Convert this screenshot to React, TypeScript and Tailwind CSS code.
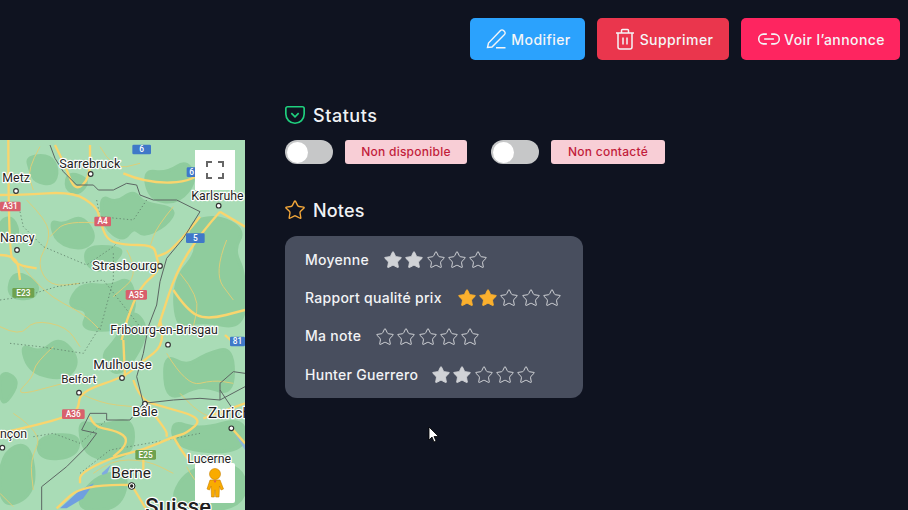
import { Star } from 'lucide-react';

// Fond de carte : coordonnées en 3x de la zone (245x370)
const blobs = [
  'M80 50 L150 45 L175 90 L160 135 L105 125 L90 90 Z',
  'M205 95 L270 120 L235 165 L195 145 Z',
  'M300 165 L350 190 L400 150 L430 190 L530 205 L500 255 L430 290 L400 260 L370 305 L310 260 Z',
  'M430 90 L500 100 L560 60 L590 120 L535 190 L450 180 Z',
  'M150 240 L190 255 L245 225 L290 290 L250 330 L170 310 Z',
  'M260 320 L350 320 L370 340 L300 400 L255 370 Z',
  'M560 250 L650 225 L735 270 L700 330 L735 400 L735 570 L600 540 L530 570 L520 420 L600 330 Z',
  'M240 430 L330 440 L390 410 L410 500 L370 570 L240 570 L270 510 L200 500 Z',
  'M40 390 L120 430 L100 480 L20 470 Z',
  'M0 240 L40 230 L60 290 L0 300 Z',
  'M400 500 L450 580 L360 720 L300 650 L350 600 Z',
  'M60 610 L120 640 L180 590 L240 660 L200 720 L90 700 Z',
  'M0 940 L90 900 L110 1060 L0 1110 Z',
  'M110 890 L240 880 L230 950 L120 960 Z',
  'M230 840 L300 860 L400 830 L400 950 L260 960 Z',
  'M490 640 L560 680 L620 640 L700 620 L700 770 L600 730 L500 790 Z',
  'M510 840 L600 870 L735 830 L735 940 L530 930 Z',
  'M560 980 L735 970 L735 1110 L500 1110 Z',
  'M280 1010 L390 990 L360 1110 L220 1110 Z',
  'M0 690 L60 720 L20 790 L0 780 Z',
];

const roads = [
  'M25 -15 L25 340 L50 375 L110 385',
  'M0 345 L50 345 L60 420',
  'M0 165 L60 165 L220 155 L290 200 L300 240 L320 300 L370 315 L460 315 L470 350 L480 390 L420 440 L380 540 L365 600',
  'M165 15 L195 75 L225 155 L270 115 L270 15',
  'M370 100 L440 130 L585 125 L640 50',
  'M600 230 L520 330 L470 350',
  'M660 215 L610 270 L530 390 L480 545 L475 560',
  'M660 215 L735 260',
  'M520 450 L560 510 L620 540 L735 510',
  'M480 540 L500 610 L420 670 L375 710 L240 755 L235 810 L200 830 L110 855 L0 880',
  'M370 600 L375 710',
  'M400 720 L420 780 L490 800 L610 835 L560 880 L520 890 L430 930 L340 950 L240 1000 L240 1030',
  'M435 790 L500 870 L500 890',
  'M270 830 L280 860 L340 870 L380 890 L375 920 L340 950',
  'M610 835 L735 790',
  'M700 870 L735 910',
  'M430 930 L430 990',
  'M395 1035 L250 1030 L170 1105',
  'M395 1035 L440 1110',
  'M520 890 L560 960 L590 970',
  'M675 585 L700 610 L735 610',
];

const thinRoads = [
  'M160 620 L105 670 L100 710 L40 770 L190 730',
  'M80 180 L140 240 L150 300 L110 370 L150 440 L240 430',
  'M300 250 L200 240 L150 290',
  'M520 200 L470 260 L450 320',
  'M500 640 L560 740 L640 720 L700 730',
  'M40 820 L130 880 L90 960 L100 1050',
  'M540 760 L620 850 L700 800',
  'M280 1000 L330 960 L440 960 L520 1000',
  'M0 560 L60 590 L100 540 L200 560 L240 620',
  'M60 370 L130 460 L250 520 L300 570',
  'M540 400 L600 470 L580 560',
  'M380 330 L420 400 L340 470',
  'M680 300 L640 400 L700 480',
  'M120 20 L80 90 L100 150',
  'M300 20 L340 90 L420 70',
  'M240 760 L300 790 L400 800',
  'M560 980 L600 1060 L700 1030',
  'M0 1060 L40 1100',
];

const borders = [
  'M150 15 L165 55 L190 95 L230 135 L280 135 L295 150 L340 150 L380 130 L410 135 L420 165 L460 180 L530 180 L600 215 L550 295 L500 355 L480 425 L470 495 L445 560 L430 640 L410 710 L430 790 L520 780 L600 775 L660 780 L660 730 L700 695 L735 700',
  'M430 790 L390 840 L320 840 L320 820 L270 820 L245 870 L290 880 L260 920 L200 980 L125 1040 L125 1110',
  'M660 780 L735 740',
  'M660 750 L700 810 L735 820',
];

const dotted = [
  'M60 215 L70 260 L130 320 L260 375 L340 320 L360 300',
  'M0 480 L70 470 L170 440 L310 420 L420 560',
  'M290 180 L300 230 L400 240 L440 180',
  'M340 340 L340 420 L300 570',
  'M30 610 L120 620 L250 640 L300 560',
  'M100 890 L160 880 L240 910 L320 840',
  'M240 1000 L330 930 L500 900 L600 880',
];

// Arrondit une suite de points en passant par les milieux des segments
function smooth(d: string) {
  const n = d.match(/-?\d+/g)!.map(Number);
  const pts: [number, number][] = [];
  for (let i = 0; i < n.length; i += 2) pts.push([n[i], n[i + 1]]);
  const closed = d.trim().endsWith('Z');
  const mid = (a: [number, number], b: [number, number]) => `${(a[0] + b[0]) / 2} ${(a[1] + b[1]) / 2}`;
  if (closed) {
    let out = `M${mid(pts[pts.length - 1], pts[0])}`;
    pts.forEach((p, i) => {
      out += ` Q${p[0]} ${p[1]} ${mid(p, pts[(i + 1) % pts.length])}`;
    });
    return out + ' Z';
  }
  let out = `M${pts[0][0]} ${pts[0][1]}`;
  for (let i = 1; i < pts.length - 1; i++) out += ` Q${pts[i][0]} ${pts[i][1]} ${mid(pts[i], pts[i + 1])}`;
  const last = pts[pts.length - 1];
  return out + ` L${last[0]} ${last[1]}`;
}

type MapLabel = { t: string; x: number; y: number; s: number; w?: number };
const labels: MapLabel[] = [
  { t: 'Sarrebruck', x: 178, y: 83, s: 38 },
  { t: 'Metz', x: 7, y: 127, s: 37 },
  { t: 'Karlsruhe', x: 574, y: 180, s: 37 },
  { t: 'Nancy', x: 0, y: 307, s: 37 },
  { t: 'Strasbourg', x: 276, y: 389, s: 40 },
  { t: 'Fribourg-en-Brisgau', x: 331, y: 583, s: 37 },
  { t: 'Mulhouse', x: 280, y: 686, s: 40 },
  { t: 'Belfort', x: 184, y: 730, s: 35 },
  { t: 'Bâle', x: 397, y: 827, s: 39 },
  { t: 'Zurich', x: 624, y: 833, s: 46 },
  { t: 'nçon', x: 0, y: 894, s: 37 },
  { t: 'Lucerne', x: 562, y: 968, s: 37 },
  { t: 'Berne', x: 334, y: 1015, s: 46 },
  { t: 'Suisse', x: 436, y: 1122, s: 66, w: 500 },
];

const shields = [
  { t: '6', x: 397, y: 14, w: 56, c: '#3f78c8' },
  { t: '6', x: 560, y: 82, w: 30, c: '#3f78c8' },
  { t: 'A31', x: 0, y: 185, w: 62, c: '#d8606c' },
  { t: 'A4', x: 283, y: 230, w: 50, c: '#d8606c' },
  { t: '5', x: 558, y: 280, w: 56, c: '#3f78c8' },
  { t: 'E23', x: 37, y: 444, w: 66, c: '#6fa24e' },
  { t: 'A35', x: 377, y: 450, w: 64, c: '#d8606c' },
  { t: '81', x: 690, y: 590, w: 45, c: '#3f78c8' },
  { t: 'A36', x: 186, y: 808, w: 68, c: '#d8606c' },
  { t: 'E25', x: 406, y: 930, w: 62, c: '#6fa24e' },
];

const cities = [
  [272, 102], [48, 153], [656, 197], [51, 330], [480, 378], [504, 614], [366, 714], [237, 758], [435, 791], [694, 865], [7, 923],
];

function MapDrawing() {
  return (
    <svg viewBox="0 0 735 1110" className="block h-full w-full" fontFamily="Roboto, sans-serif">
      <rect width="735" height="1110" fill="#a9dcb6" />
      {blobs.map((d) => (
        <path key={d} d={smooth(d)} fill="#8fcc9d" stroke="#8fcc9d" strokeWidth="10" strokeLinejoin="round" />
      ))}
      <path d="M180 1105 L240 1050 L282 1030 L250 1075 L200 1105 Z" fill="#6f9fe0" />
      <path d="M305 1000 L332 975 L322 1000 L308 1005 Z" fill="#7fabe0" />
      <path d="M702 880 L735 915 L735 930 Z" fill="#8fb6dc" />
      {thinRoads.map((d) => (
        <path key={d} d={smooth(d)} fill="none" stroke="#dccf7a" strokeWidth="3" />
      ))}
      {dotted.map((d) => (
        <path key={d} d={d} fill="none" stroke="#5f7f6a" strokeWidth="2.5" strokeDasharray="4 7" />
      ))}
      {roads.map((d) => (
        <path key={d} d={smooth(d)} fill="none" stroke="#f9d56e" strokeWidth="7" strokeLinejoin="round" />
      ))}
      {borders.map((d) => (
        <path key={d} d={d} fill="none" stroke="#5c6663" strokeWidth="3" strokeLinejoin="round" />
      ))}
      {cities.map(([x, y]) => (
        <circle key={`${x}-${y}`} cx={x} cy={y} r="7" fill="#fff" stroke="#333" strokeWidth="3.5" />
      ))}
      <circle cx="395" cy="1038" r="10" fill="#fff" stroke="#222" strokeWidth="3" />
      <circle cx="395" cy="1038" r="5" fill="#222" />
      {shields.map((s) => (
        <g key={s.t + s.x}>
          <rect x={s.x} y={s.y} width={s.w} height="29" rx="4" fill={s.c} />
          <text x={s.x + s.w / 2} y={s.y + 23} textAnchor="middle" fontSize="25" fontWeight="500" fill="#fff">
            {s.t}
          </text>
        </g>
      ))}
      {labels.map((l) => (
        <text
          key={l.t}
          x={l.x}
          y={l.y}
          fontSize={l.s}
          fontWeight={l.w ?? 400}
          fill="#1f1f1f"
          stroke="#fff"
          strokeWidth="7"
          strokeLinejoin="round"
          paintOrder="stroke"
        >
          {l.t}
        </text>
      ))}
    </svg>
  );
}

function RatingStars({ filled, color, className }: { filled: number; color: string; className: string }) {
  return (
    <div className={`flex gap-[1.3px] ${className}`}>
      {[0, 1, 2, 3, 4].map((i) => (
        <Star
          key={i}
          size={20}
          strokeWidth={1.2}
          color={i < filled ? color : '#d0d2d6'}
          fill={i < filled ? color : 'none'}
        />
      ))}
    </div>
  );
}

function Toggle() {
  return (
    <div className="flex h-6 w-12 items-center rounded-full bg-[#c6c7c8] pl-[2px]">
      <div className="h-[21px] w-[21px] rounded-full bg-white" />
    </div>
  );
}

const buttonClass =
  'flex h-[42px] items-center justify-center rounded-[5px] text-[14px] font-medium tracking-[0.03em] text-[#f4f5f7]';

const ratings = [
  { label: 'Moyenne', filled: 2, color: '#d0d2d6', stars: 'ml-[14px]' },
  { label: 'Rapport qualité prix', filled: 2, color: '#fbb02d', stars: 'ml-[15px]' },
  { label: 'Ma note', filled: 0, color: '#d0d2d6', stars: 'ml-[14px]' },
  { label: 'Hunter Guerrero', filled: 2, color: '#d0d2d6', stars: 'ml-[13px]' },
];

export default function App() {
  return (
    <div className="flex h-[510px] w-[908px] overflow-hidden bg-[#0f1320] font-['Inter','Liberation_Sans',sans-serif]">
      {/* Carte */}
      <div className="relative mt-[140px] h-[370px] w-[245px] shrink-0 overflow-hidden">
        <MapDrawing />
        <div className="absolute left-[195px] top-[10px] flex h-10 w-10 items-center justify-center bg-white">
          <svg width="18" height="18" viewBox="0 0 18 18" fill="none" stroke="#666" strokeWidth="2">
            <path d="M1 6V1h5M12 1h5v5M17 12v5h-5M6 17H1v-5" />
          </svg>
        </div>
        <div className="absolute left-[195px] top-[323px] flex h-10 w-10 items-center justify-center rounded-[2px] bg-white">
          <svg width="18" height="30" viewBox="0 0 18 30">
            <circle cx="9" cy="6" r="5.500" fill="#f9ab00" stroke="#c77f00" strokeWidth="0.6" />
            <path
              d="M4 12h10l3.500 9-2.500 1-1.500-4-.5 11H9.700l-.5-7h-.4l-.5 7H5.500L5 18l-1.500 4L1 21z"
              fill="#f9ab00"
              stroke="#c77f00"
              strokeWidth="0.6"
            />
            <path d="M7.500 12.500l1.500 2.500 1.500-2.500z" fill="#e2574c" />
          </svg>
        </div>
      </div>

      {/* Contenu */}
      <div className="flex flex-1 flex-col">
        <div className="flex justify-end gap-3 pr-2 pt-[18px]">
          <button className={`${buttonClass} w-[115px] gap-[3px] bg-[#2ba2fd]`}>
            <svg width="24" height="24" viewBox="0 0 24 24" fill="none" stroke="currentColor" strokeWidth="1.4">
              <path d="M3.500 20.500l1-4.500L16.500 3.500a2.100 2.100 0 0 1 3 0l1 1a2.100 2.100 0 0 1 0 3L8 20zM12 20.800h9.500" />
            </svg>
            Modifier
          </button>
          <button className={`${buttonClass} w-[132px] gap-[3px] bg-[#ea364d]`}>
            <svg width="24" height="24" viewBox="0 0 24 24" fill="none" stroke="currentColor" strokeWidth="1.5">
              <path d="M3 6h18M8.500 6V3.500a1 1 0 0 1 1-1h5a1 1 0 0 1 1 1V6M5 6v14a2 2 0 0 0 2 2h10a2 2 0 0 0 2-2V6M10 10.500v7M14 10.500v7" />
            </svg>
            Supprimer
          </button>
          <button className={`${buttonClass} w-[159px] gap-[2px] bg-[#fe2560]`}>
            <svg width="26" height="26" viewBox="0 0 24 24" fill="none" stroke="currentColor" strokeWidth="1.4">
              <path d="M10 7.500H7a4.500 4.500 0 0 0 0 9h3M14 7.500h3a4.500 4.500 0 0 1 0 9h-3M7.500 12h9" />
            </svg>
            Voir l’annonce
          </button>
        </div>

        <div className="ml-10 mt-[44px]">
          <div className="-ml-px flex h-[22px] items-center gap-[7px] text-[18px] font-medium tracking-[0.03em] text-[#f0f2f5]">
            <svg width="22" height="22" viewBox="0 0 24 24" fill="none" stroke="#1fd07e" strokeWidth="1.8">
              <path d="M4 3h16a2 2 0 0 1 2 2v6a10 10 0 0 1-20 0V5a2 2 0 0 1 2-2z" />
              <path d="M8 10l4 4 4-4" />
            </svg>
            Statuts
          </div>
          <div className="mt-[14px] flex items-center">
            <Toggle />
            <div className="ml-3 flex h-6 w-[122px] items-center justify-center rounded-[3px] bg-[#f8ced6] text-[12px] font-medium tracking-[0.02em] text-[#c21d3b]">
              Non disponible
            </div>
            <div className="ml-6">
              <Toggle />
            </div>
            <div className="ml-3 flex h-6 w-[114px] items-center justify-center rounded-[3px] bg-[#f8ced6] text-[12px] font-medium tracking-[0.02em] text-[#c21d3b]">
              Non contacté
            </div>
          </div>

          <div className="-ml-px mt-[35px] flex h-[22px] items-center gap-[7px] text-[18px] font-medium tracking-[0.01em] text-[#f0f2f5]">
            <Star size={22} strokeWidth={1.5} color="#f3a73a" />
            Notes
          </div>
          <div className="mt-[15px] h-[162px] w-[298px] rounded-[12px] bg-[#484e5e] px-5 pt-[5px]">
            {ratings.map((r) => (
              <div key={r.label} className="flex h-[38.3px] items-center">
                <span className="mb-[2px] whitespace-nowrap text-[14px] font-medium tracking-[0.02em] text-[#f2f3f5]">
                  {r.label}
                </span>
                <RatingStars filled={r.filled} color={r.color} className={r.stars} />
              </div>
            ))}
          </div>
        </div>

        {/* Curseur de souris */}
        <div className="relative">
          <svg className="absolute left-[183px] top-[28px]" width="13" height="18" viewBox="0 0 13 18">
            <path d="M1 1v13l3-3 2 5 2-1-2-4.500h4.500z" fill="#fff" stroke="#000" strokeWidth="0.8" />
          </svg>
        </div>
      </div>
    </div>
  );
}
